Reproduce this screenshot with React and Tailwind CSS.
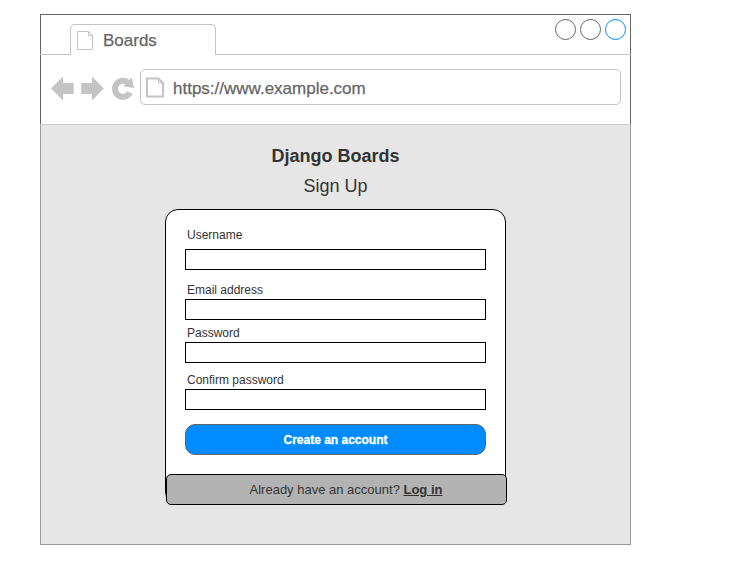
const fields = [
  { label: "Username", gap: "pt-[18px]", inner: "mt-[7px]" },
  { label: "Email address", gap: "pt-[13px]", inner: "mt-[2px]" },
  { label: "Password", gap: "pt-[6px]", inner: "mt-[2px]" },
  { label: "Confirm password", gap: "pt-[10px]", inner: "mt-[2px]" },
];

function PageIcon({ className, stroke, d, fold }) {
  return (
    <svg className={className} fill="none" stroke="#c4c4c4" strokeWidth={stroke}>
      <path d={d} />
      <path d={fold} strokeWidth="1" />
    </svg>
  );
}

function TabStrip() {
  return (
    <div className="flex h-10 shrink-0">
      <div className="w-[30px] shrink-0 border-b border-[#c4c4c4] -ml-px" />
      <div className="mt-[9px] flex h-[31px] w-[146px] shrink-0 rounded-t-[5px] border border-b-0 border-[#c4c4c4] bg-white">
        <PageIcon
          className="ml-[6px] mt-[6px] h-[20px] w-[17px] shrink-0"
          stroke="1"
          d="M.5 .5H11.5L15.5 4.5V18.5H.5Z"
          fold="M11.5 .5V4.5H15.5"
        />
        <span className="ml-[9px] mt-[6px] text-[17px] leading-5 text-[#666] [-webkit-text-stroke:0.25px_#666]">Boards</span>
      </div>
      <div className="-mr-px flex grow justify-end gap-1 border-b border-[#c4c4c4] pr-[5px] pt-1">
        <div className="size-[21px] rounded-full border border-[#666]" />
        <div className="size-[21px] rounded-full border border-[#666]" />
        <div className="size-[21px] rounded-full border border-[#008cff]" />
      </div>
    </div>
  );
}

function AddressBar() {
  return (
    <div className="flex h-[69px] shrink-0 pt-[14px]">
      <svg className="h-[36px] w-[99px] shrink-0" viewBox="41 69 99 36">
        <path
          fill="#c4c4c4"
          d="M51 88.5L63 76.5V83H73.7V94H63V100.5ZM103.7 88.5L92 76.5V83H81.2V94H92V100.5Z"
        />
        <path d="M130 92.6A8 8 0 1 1 128.5 83" fill="none" stroke="#c4c4c4" strokeWidth="6" />
        <path d="M131.8 77.4L134 88L123.2 86.2Z" fill="#c4c4c4" />
      </svg>
      <div className="flex h-9 w-[481px] rounded-[5px] border border-[#c4c4c4]">
        <PageIcon
          className="ml-[5px] mt-[7px] h-[22px] w-[19px] shrink-0"
          stroke="2"
          d="M1 1.5H12.5L17 6V19.5H1Z"
          fold="M12.5 1.5V6H17"
        />
        <span className="ml-[8px] mt-[9px] text-[17px] leading-5 text-[#666] [-webkit-text-stroke:0.25px_#666]">
          https://www.example.com
        </span>
      </div>
    </div>
  );
}

function SignUpCard() {
  return (
    <div className="h-[296px] w-[341px] rounded-[13px] border border-black bg-white">
      <div className="flex h-[264px] flex-col px-[19px]">
        {fields.map((f) => (
          <label key={f.label} className={"block " + f.gap}>
            <span className="block pl-[2px] text-[12px] leading-[14px] text-[#333]">{f.label}</span>
            <input className={"block h-[21px] w-[301px] border border-black bg-white " + f.inner} />
          </label>
        ))}
        <button className="mt-[14px] h-[31px] w-[301px] rounded-[10px] border border-[#666] bg-[#008cff] pt-px text-[12px] font-bold leading-[28px] text-white [-webkit-text-stroke:0.3px_white]">
          Create an account
        </button>
      </div>
      <div className="h-[31px] w-[341px] rounded-[5px] border border-black bg-[#b3b3b3] pl-[19px] text-center text-[13px] leading-[29px] text-[#333]">
        Already have an account? <a className="font-bold underline">Log in</a>
      </div>
    </div>
  );
}

export default function App() {
  return (
    <div className="h-[563px] w-[732px] overflow-hidden bg-white pl-10 pt-[14px] font-['Liberation_Sans',Arial,sans-serif]">
      <div className="flex h-[531px] w-[591px] flex-col">
        <div className="flex h-[110px] shrink-0 flex-col border border-b-0 border-[#666]">
          <TabStrip />
          <AddressBar />
        </div>
        <div className="flex grow flex-col items-center border border-t-[#ccc] border-[#999] bg-[#e6e6e6] pt-[20px] text-[#333]">
          <h1 className="text-[18px] font-bold leading-[22px]">Django Boards</h1>
          <h2 className="mb-[12px] mt-[8px] text-[18px] leading-[22px]">Sign Up</h2>
          <SignUpCard />
        </div>
      </div>
    </div>
  );
}
